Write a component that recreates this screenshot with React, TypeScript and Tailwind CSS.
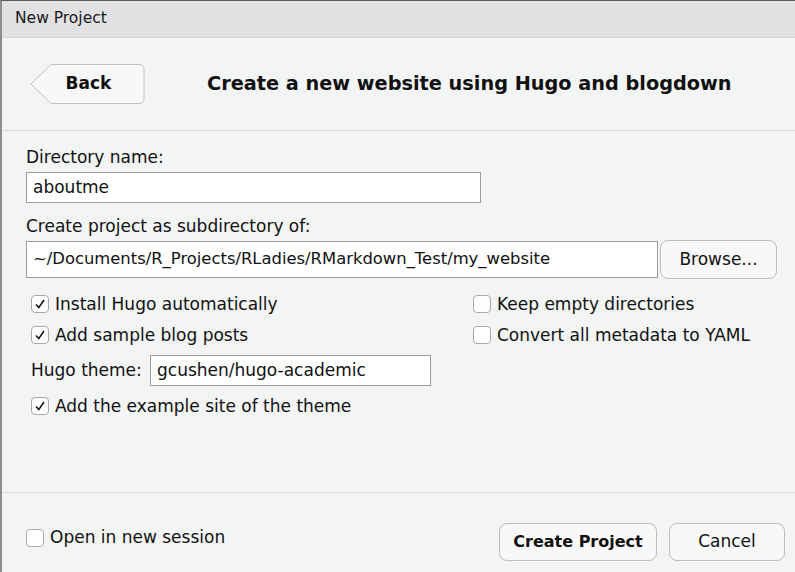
import type { ReactNode } from 'react';

const font = { fontFamily: '"DejaVu Sans", Verdana, sans-serif' };

// Mac style checkbox, with a thin tick when checked
const CheckBox = ({ checked, label }: { checked?: boolean; label: string }) => {
	return (
		<div className="flex items-center gap-[6px]">
			<div className="w-[18px] h-[18px] rounded-[4px] border border-[#a9a9a9] bg-white flex items-center justify-center">
				{checked && (
					<svg width="12" height="12" viewBox="0 0 12 12">
						<path d="M2 6.5 L4.8 9.5 L10 2" fill="none" stroke="#111" strokeWidth="1.5" />
					</svg>
				)}
			</div>
			<span className="text-[17px] text-[#111] leading-none">{label}</span>
		</div>
	);
};

const PushButton = ({ children, className }: { children: ReactNode; className: string }) => {
	return (
		<button
			type="button"
			className={`h-[38px] rounded-[8px] border border-[#bdbdbd] bg-[#f8f8f8] text-[#111] flex items-center justify-center ${className}`}
		>
			{children}
		</button>
	);
};

const TextBox = ({ value, className }: { value: string; className: string }) => {
	return (
		<div className={`border border-[#9c9c9c] bg-white flex items-center pl-[6px] text-[#111] ${className}`}>
			{value}
		</div>
	);
};

const App = () => {
	return (
		<div
			style={font}
			className="w-[795px] h-[572px] bg-[#f3f4f4] border-l-2 border-l-[#8c8c8c] border-t border-t-[#5a5a5a] flex flex-col overflow-hidden"
		>
			{/* window title */}
			<div className="h-[37px] bg-[#e1e1e4] border-b border-[#d4d4d6] flex items-center pl-[13px] text-[15.5px] text-[#1a1a1a]">
				New Project
			</div>

			{/* header with back button */}
			<div className="h-[93px] flex items-center border-b border-[#d8d8d8] shrink-0">
				<div className="relative ml-[28px] w-[115px] h-[40px] flex items-center justify-center">
					<svg className="absolute inset-0" width="115" height="40" viewBox="0 0 115 40">
						<path
							d="M21 0.5 H109 Q114 0.5 114 5.5 V34.5 Q114 39.5 109 39.5 H21 L1 20 Z"
							fill="#f7f7f7"
							stroke="#c2c2c2"
						/>
					</svg>
					<span className="relative ml-[2px] text-[17px] font-bold text-[#111]">Back</span>
				</div>
				<h1 className="ml-[62px] text-[19.3px] font-bold text-[#111]">
					Create a new website using Hugo and blogdown
				</h1>
			</div>

			{/* form */}
			<div className="flex flex-col pl-[24px] pt-[17px] grow">
				<div className="h-[20px] flex items-center text-[17px] text-[#111]">Directory name:</div>
				<TextBox value="aboutme" className="mt-[4px] w-[455px] h-[31px] text-[17px]" />
				<div className="mt-[14px] h-[20px] flex items-center text-[17px] text-[#111]">
					Create project as subdirectory of:
				</div>
				<div className="mt-[3px] flex items-center gap-[2px]">
					<TextBox
						value="~/Documents/R_Projects/RLadies/RMarkdown_Test/my_website"
						className="w-[632px] h-[37px] text-[16.4px]"
					/>
					<PushButton className="w-[117px] h-[39px] text-[17px]">Browse...</PushButton>
				</div>

				<div className="mt-[16px] ml-[5px] flex">
					<div className="w-[442px] flex flex-col gap-[13px]">
						<CheckBox checked label="Install Hugo automatically" />
						<CheckBox checked label="Add sample blog posts" />
					</div>
					<div className="flex flex-col gap-[13px]">
						<CheckBox label="Keep empty directories" />
						<CheckBox label="Convert all metadata to YAML" />
					</div>
				</div>

				<div className="mt-[11px] ml-[5px] flex items-center">
					<span className="w-[119px] text-[17px] text-[#111]">Hugo theme:</span>
					<TextBox value="gcushen/hugo-academic" className="w-[281px] h-[31px] text-[17px]" />
				</div>
				<div className="mt-[11px] ml-[5px]">
					<CheckBox checked label="Add the example site of the theme" />
				</div>
			</div>

			{/* footer */}
			<div className="h-[80px] border-t border-[#d8d8d8] flex items-center pl-[24px] pr-[10px] shrink-0">
				<div className="mt-[10px]">
					<CheckBox label="Open in new session" />
				</div>
				<div className="ml-auto flex items-center gap-[12px] mt-[18px]">
					<PushButton className="w-[158px] font-bold text-[16px]">Create Project</PushButton>
					<PushButton className="w-[116px] text-[17px]">Cancel</PushButton>
				</div>
			</div>
		</div>
	);
};

export default App;
